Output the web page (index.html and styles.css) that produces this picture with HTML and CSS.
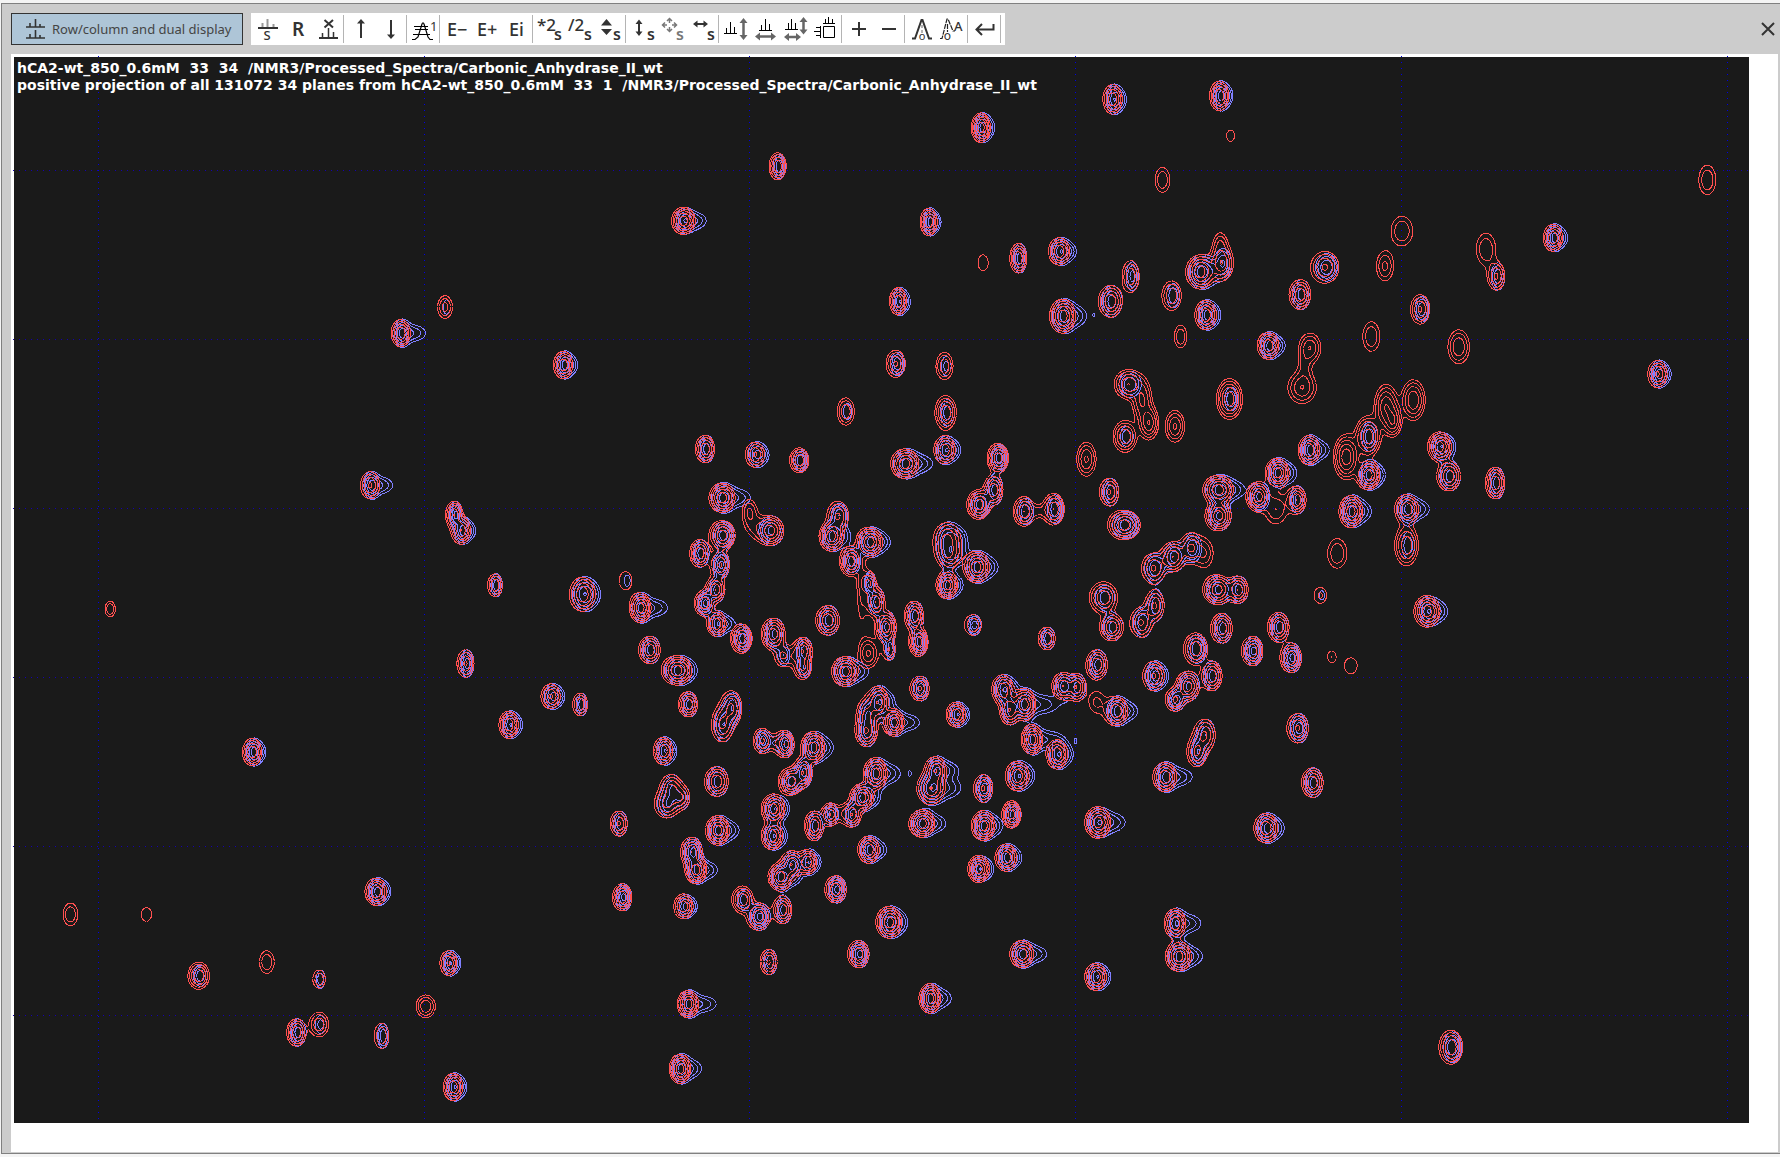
FILE: index.html
```html
<!DOCTYPE html>
<html lang="en">
<head>
<meta charset="utf-8">
<title>Row/column and dual display</title>
<link rel="stylesheet" href="styles.css">
</head>
<body>
<main class="window">
  <header class="bar">
    <button class="mode" type="button">
      <svg class="mode-icon" viewBox="0 0 20 22"><path d="M0 9H19M0 20H19M4 5V9M9.5 1V9M14 6V9M4 16V20M9.5 12V20M14 17V20" stroke="#333" stroke-width="1.6" fill="none"/></svg>
      <span>Row/column and dual display</span>
    </button>
    <div class="tools" role="toolbar" aria-label="Dual display tools">
      <div class="group">
        <button type="button" aria-label="Swap spectra"><svg viewBox="0 0 30 32"><path d="M10.500 10V15M15.500 6V15M21.500 11V15" stroke="#999" stroke-width="2"/><path d="M6 15H26" stroke="#333" stroke-width="2"/><text x="15" y="27" font-size="13" font-weight="500" text-anchor="middle">S</text></svg></button>
        <button type="button" aria-label="Reset"><svg viewBox="0 0 30 32"><text x="16" y="22.500" font-size="19" font-weight="600" text-anchor="middle">R</text></svg></button>
        <button type="button" aria-label="Remove trace"><svg viewBox="0 0 30 32"><path d="M12.500 7L21 14.500M21 7L12.500 14.500M7 25H26" class="l2"/><path d="M10.500 20V25M16.500 15V25M21.500 19V25" class="l1"/></svg></button>
      </div>
      <div class="group">
        <button type="button" aria-label="Next"><svg viewBox="0 0 30 32"><path d="M16 8V25" class="l2"/><path d="M12 10.500L16 6L20 10.500Z" class="f"/></svg></button>
        <button type="button" aria-label="Previous"><svg viewBox="0 0 30 32"><path d="M16 7V23" class="l2"/><path d="M12 21.500L16 26L20 21.500Z" class="f"/></svg></button>
      </div>
      <div class="group">
        <button type="button" aria-label="First level"><svg viewBox="0 0 30 32"><path d="M4 26.500H7L10 24L14 11Q15 8.500 16 11L20 24L22 26.500H25M6 13.500H20M7 16.500H20M5 21.500H22" stroke="#000" stroke-width="1.2" fill="none"/><text x="22" y="18" font-size="13">1</text></svg></button>
      </div>
      <div class="group">
        <button type="button"><svg viewBox="0 0 30 32"><text x="6" y="23" font-size="18" font-weight="500">E−</text></svg></button>
        <button type="button"><svg viewBox="0 0 30 32"><text x="6" y="23" font-size="18" font-weight="500">E+</text></svg></button>
        <button type="button"><svg viewBox="0 0 30 32"><text x="8" y="23" font-size="18" font-weight="500">Ei</text></svg></button>
      </div>
      <div class="group">
        <button type="button"><svg viewBox="0 0 30 32"><text x="3" y="18" font-size="17" font-weight="500">*2</text><text x="20" y="27" font-size="16" font-weight="600">s</text></svg></button>
        <button type="button"><svg viewBox="0 0 30 32"><text x="4" y="18" font-size="17" font-weight="500">/2</text><text x="20" y="27" font-size="16" font-weight="600">s</text></svg></button>
        <button type="button"><svg viewBox="0 0 30 32"><path d="M7 12.500L12.500 6L18 12.500ZM7 16L12.500 22L18 16Z" class="f"/><text x="19" y="27" font-size="16" font-weight="600">s</text></svg></button>
      </div>
      <div class="group">
        <button type="button"><svg viewBox="0 0 30 32"><path d="M12 9V21" class="l2"/><path d="M8.500 11L12 6.500L15.500 11ZM8.500 18.500L12 23L15.500 18.500Z" class="f"/><text x="20" y="27" font-size="16" font-weight="600">s</text></svg></button>
        <button type="button"><svg viewBox="0 0 30 32"><path d="M12.500 10V6M10 8L12.500 5.500L15 8M12.500 14V18M10 16L12.500 18.500L15 16M10 12H6M8 9.500L5.500 12L8 14.500M15 12H19M17 9.500L19.500 12L17 14.500" stroke="#777" stroke-width="1.500" fill="none"/><text x="19" y="27" font-size="16" font-weight="600" fill="#777">s</text></svg></button>
        <button type="button"><svg viewBox="0 0 30 32"><path d="M9 11H18" class="l2"/><path d="M10.500 7.500L6 11L10.500 14.500ZM16.500 7.500L21 11L16.500 14.500Z" class="f"/><text x="20" y="27" font-size="16" font-weight="600">s</text></svg></button>
      </div>
      <div class="group">
        <button type="button" aria-label="Fit vertically"><svg viewBox="0 0 30 32"><path d="M4 20.500H17M6.500 15V20M10.500 9V20M14.500 14V20" class="k"/><path d="M23.500 9V23" stroke="#666" stroke-width="2.500"/><path d="M19.500 10L23.500 5L27.500 10ZM19.500 22L23.500 27L27.500 22Z" fill="#666"/></svg></button>
        <button type="button" aria-label="Fit horizontally"><svg viewBox="0 0 30 32"><path d="M9 17.500H22M11.500 12V17M15.500 6V17M19.500 11V17" class="k"/><path d="M8 23.500H23" stroke="#666" stroke-width="2.500"/><path d="M10 19.500L5 23.500L10 27.500ZM21 19.500L26 23.500L21 27.500Z" fill="#666"/></svg></button>
        <button type="button" aria-label="Fit all"><svg viewBox="0 0 30 32"><path d="M5 16.500H18M8.500 10V16M11.500 6V16M15.500 10V16" class="k"/><path d="M23.500 8V18M8 24H17" stroke="#666" stroke-width="2.500"/><path d="M19.500 9L23.500 4L27.500 9ZM19.500 16.500L23.500 21.500L27.500 16.500ZM9 20L4 24L9 28ZM16 20L21 24L16 28Z" fill="#666"/></svg></button>
        <button type="button" aria-label="Projections"><svg viewBox="0 0 30 32"><path d="M13.500 13.500H24.500V24.500H13.500ZM13 10.500H25M15.500 6V10M18.500 4V10M22.500 6V10M10.500 13V25M6 14.500H10M4 18.500H10M6 22.500H10" class="k"/></svg></button>
      </div>
      <div class="group">
        <button type="button" aria-label="Add"><svg viewBox="0 0 30 32"><path d="M9 16H23M16 9V23" class="l2"/></svg></button>
        <button type="button" aria-label="Subtract"><svg viewBox="0 0 30 32"><path d="M9 16H23" class="l2"/></svg></button>
      </div>
      <div class="group">
        <button type="button" aria-label="Baseline peak"><svg viewBox="0 0 30 32"><path d="M6 25.500H9L15.500 7H16.500L23 25.500H26" class="l2"/><path d="M16 12V20" stroke="#999" stroke-width="1.500" stroke-dasharray="3 2"/><text x="16" y="27" font-size="11" text-anchor="middle">o</text></svg></button>
        <button type="button" aria-label="Automatic peak"><svg viewBox="0 0 30 32"><path d="M4 25.500H6L11 6H12L17 18H19M11.500 11V19" stroke="#222" stroke-width="1.200" stroke-dasharray="5 1" fill="none"/><text x="18" y="18" font-size="13" font-weight="500">A</text><text x="11.500" y="27" font-size="12" text-anchor="middle">o</text></svg></button>
      </div>
      <div class="group">
        <button type="button" aria-label="Return"><svg viewBox="0 0 30 32"><path d="M24.500 11V16.500H8M13 11L7.500 16.500L13 22" class="l2"/></svg></button>
      </div>
    </div>
    <button class="close" type="button" aria-label="Close"><svg viewBox="0 0 14 14"><path d="M1 1L13 13M13 1L1 13" class="l2"/></svg></button>
  </header>
  <section class="panel">
    <div class="plot">
      <svg class="spectrum" viewBox="12.3 50.2 1528.4 939" role="img" aria-label="Contour plot of two overlaid spectra">
        <path class="grid-row" d="M11.500 150H1540.700M11.500 299H1540.700M11.500 448H1540.700M11.500 597H1540.700M11.500 746H1540.700M11.500 894.500H1540.700"/>
        <path class="grid-col" d="M86.700 49.400V989M373.900 49.400V989M660.200 49.400V989M947.500 49.400V989M1234.700 49.400V989M1521.900 49.400V989"/>
        <path id="projection" class="contour contour-blue"/>
        <path id="plane" class="contour contour-red"/>
      </svg>
      <p class="caption">hCA2-wt_850_0.6mM  33  34  /NMR3/Processed_Spectra/Carbonic_Anhydrase_II_wt
positive projection of all 131072 34 planes from hCA2-wt_850_0.6mM  33  1  /NMR3/Processed_Spectra/Carbonic_Anhydrase_II_wt</p>
    </div>
  </section>
</main>
<script src="spectrum.js"></script>
</body>
</html>
```
FILE: styles.css
```css
* { box-sizing: border-box; }
body { margin: 0; background: #f4f4f4; font-family: "Noto Sans", sans-serif; color: #333; }
.window { margin: 3px 0 3px 1px; padding: 0 2px 1px 9px; border: 1px solid #808080; border-right: 0; background: #ccc; }
.bar { display: flex; align-items: center; height: 50px; }
button { margin: 0; padding: 0; border: 0; background: none; font: inherit; color: inherit; }
svg { display: block; }
.mode { display: flex; align-items: center; gap: 6px; height: 32px; width: 232px; padding-left: 14px; border: 1px solid #333; background: #aec5d7; font-size: 13px; white-space: nowrap; color: #444; }
.mode-icon { width: 20px; height: 22px; }
.tools { display: flex; height: 32px; margin-left: 8px; padding: 0 3px 0 1px; background: #fff; }
.group { display: flex; padding-right: 3px; background: linear-gradient(#b4b4b4, #b4b4b4) right 1px center / 1px 28px no-repeat; }
.group button, .group svg { width: 30px; height: 32px; }
.group text { fill: #333; font-family: "Noto Sans", sans-serif; }
.group text[fill] { fill: #777; }
.l1 { stroke: #333; stroke-width: 1.5; fill: none; }
.l2 { stroke: #333; stroke-width: 2; fill: none; }
.k { stroke: #000; stroke-width: 1; fill: none; }
.f { fill: #333; }
.close { margin-left: auto; margin-right: 3px; }
.close svg { width: 14px; height: 14px; }
.panel { padding: 3px 29px 29px 3px; background: #fff; }
.plot { position: relative; background: #1a1a1a; }
.spectrum { width: 100%; height: auto; overflow: visible; }
.spectrum path { fill: none; stroke-width: 1px; vector-effect: non-scaling-stroke; shape-rendering: crispEdges; }
.spectrum .grid-row { stroke: #1400b4; stroke-dasharray: 1 5; }
.spectrum .grid-col { stroke: #0000e6; stroke-dasharray: 1 5; }
.spectrum .contour-blue { stroke: #8080ff; }
.spectrum .contour-red { stroke: #ff5050; }
.caption { position: absolute; left: 3px; top: 3px; margin: 0; font: bold 14px/17px "DejaVu Sans", sans-serif; white-space: pre; color: #fff; }
```
FILE: spectrum.js
```js
// One peak per entry: x y rx ry redLevels blueLevels [blueTail]
const peaks = `
981 87 8 13 5 5 2;1075 84 8 13 5 6 2;1085 119 3 5 1 0;865 112 8 13 6 6 2;686 146 7 12 5 4;603 194 10 12 6 5 8;819 195 7 12 5 6 2
1025 158 6 11 2 0;1505 158 7 13 2 0;1236 203 9 13 2 0;1221 234 7 13 2.3 0;1369 209 8 12 5 6 3;867 231 4 7 1 0;898 227 7 13 5 5
934 221 9 12 5 5 4;997 243 7 14 3 2.5;1058 239 12 15 6 6 6;1077 231 10 16 5 3;1076 215 5 10 2 0;1168 235 12 14 4 3;1146 259 9 13 5 5;1033 260 8 13 3 2
979 265 10 14 5 5;937 278 11 15 6 6 8;963 277 1.5 1.5 0 1;1063 277 9 13 5 6 2;1041 296 5 10 2 0;1118 304 9 12 5 6 4;1155 306 9 13 3 0
1150 322 3 8 1 0;1148 341 12 14 3 0;1209 296 7 13 2 0;1252 272 8 13 4 3;1310 219 8 14 2 0;1319 243 7 12 4 4;1286 305 9 15 3 0;1461 329 8 12 4 6 2
792 265 7 12 5 5 2;790 320 8 12 4 3;833 322 7 12 3 1.5;746 362 7 12 3 1;834 363 9 15 5 3;393 270 6 10 2.5 1;354 293 8 12 5 6 12
497 321 8 12 5 6 3;995 338 12 13 5 4;1007 352 8 18 4 0;1013 372 8 15 5 0;992 384 10 14 5 2;1036 375 8 14 4 0;1084 351 11 18 6 2
958 404 8 15 4 0;1246 352 10 18 5 0;1222 358 10 20 5 0;1228 370 7 14 5 0;1206 384 11 18 6 3;1187 402 11 20 6 0;1154 396 9 13 5 6 7
1269 393 10 13 6 5 2;1277 419 10 13 5 5;1318 425 8 14 5 5;1206 418 10 13 6 6 3;1126 416 10 13 6 6 5;1109 437 10 13 6 6;1143 440 8 12 5 5
1125 448 9 13 2 0;1074 431 13 13 6 6 8;1074 454 11 13 6 6;1191 450 10 14 6 6 6;1240 448 10 13 5 6 8;1240 480 10 18 5 2;1179 487 8 13 2 0
1164 524 5 7 1.2 .4;1258 538 11 14 6 5 5;1174 578 3 5 1 0;1191 586 5 7 1 0;327 427 8 12 4 6 10;401 453 7 12 5 6;407 467 8 12 5 6 3
437 515 6 10 3 3;514 523 11 15 5 5 2;552 511 5 8 1 .4;98 536 4 7 2 0;565 535 9 13 6 6 13;573 572 9 12 5 5;411 584 7 12 4 5
486 613 8 11 4 4 2;512 620 6 10 3 3;449 638 8 12 5 5 2;597 590 13 13 6 6 2;607 620 8 11 5 5;223 662 8 12 5 6 2;622 395 8 12 5 5
666 400 8 11 4 4 2;705 405 8 11 5 4;798 408 12 13 6 6 10;833 396 9 12 5 5 3;880 403 9 13 6 5;876 431 8 13 5 5;863 444 10 13 6 5
903 450 9 13 5 4;916 450 4 4 1 0;929 448 9 14 5 4;978 433 8 12 4 4;991 462 14 13 6 5;637 438 11 13 6 6 12;637 471 11 13 6 5;617 487 8 12 5 5
635 497 8 12 4 6;631 519 8 11 5 5;621 531 8 11 5 6;632 549 8 11 5 5 6;654 562 9 13 6 5;661 450 5 10 2 0;665 462 5 8 1 0;679 467 12 13 6 6
739 454 9 13 4 3;733 472 10 13 6 6 5;767 477 11 13 6 6 5;750 494 9 13 6 5;766 513 6 10 4 5;772 530 8 13 5 5;781 552 9 14 6 6
760 520 3 24 1 0;766 575 8 13 4 0;784 572 5 9 2 3;730 546 10 13 5 5;745 591 11 13 6 6 8;682 558 10 14 6 6;690 577 6 9 2 2;699 578 4 5 1 0;708 573 8 12 5 5
708 588 7 10 4 3;806 542 8 13 5 5;810 565 8 13 6 5;811 606 8 11 4 5;835 474 11 14 4 4 4;836 487 10 13 4 4 4;835 515 9 12 6 6 3
861 499 11 14 6 6 6;858 550 7 9 2 5;923 562 7 10 3 3;843 629 8 11 5 5 2;645 623 9 15 4 3;637 638 9 15 4 4;774 618 9 14 5 5 4
764 629 8 14 4 4;764 644 9 13 5 5;788 636 9 12 6 6 12;585 661 8 12 5 5 2;592 694 9 12 4 4;588 708 10 12 4 4;600 702 8 10 3 3;632 688 10 13 5 5
672 652 7 11 4 5;682 654 4 5 1 1;692 655 8 12 5 6;717 658 10 14 6 6 6;697 688 10 12 6 5;708 680 8 13 5 6;682 712 10 13 6 5 2;681 736 9 12 5 5 2
718 727 8 13 5 5;732 717 7 10 5 5;742 716 4 5 1 0;751 717 8 11 5 5;760 702 10 12 6 6 4;772 681 10 14 6 6 10;801 681 1 2 0 1;825 678 9 12 5 5 9
821 694 12 14 5 5 12;813 725 11 12 6 6 8;867 694 8 12 4 5;897 683 10 13 5 5 3;867 727 10 13 6 6 5;892 717 8 12 6 5;887 755 9 12 5 6 3
863 765 9 12 6 5 2;766 748 9 12 5 6 5;633 731 10 13 6 6 7;546 725 7 11 4 4;610 750 9 13 5 6;614 766 9 12 6 6 8;549 790 8 12 5 6
603 798 8 11 5 4 2;655 792 9 12 5 3;669 807 10 12 5 6;690 801 8 12 5 5;688 772 10 12 6 6 6;698 761 9 12 5 6;712 759 8 11 5 5 2
737 783 9 12 5 6;678 847 7 11 4 4;757 840 9 12 5 6;784 812 11 14 6 6 3;884 607 9 13 5 5 3;890 625 8 13 5 5;903 620 10 14 6 6 18
910 651 9 13 6 6 14;932 664 9 13 5 5 3;937 604 9 12 5 5;949 605 8 12 5 5;967 585 9 13 5 5;984 626 10 13 5 6 7;967 618 6 9 1.3 0
1017 595 9 13 4 6 2;973 526 12 14 5 3;980 552 10 12 5 5;1006 548 9 13 4 4;1018 533 8 13 4 4;1017 500 10 13 4 4;1034 490 10 13 5 5
1050 482 9 13 4 4;1062 487 7 12 2 0;1073 519 12 13 6 6;1091 519 9 12 5 5;1077 553 9 13 5 5;1054 571 10 14 5 4;1104 573 9 13 5 6
1127 552 9 13 5 5;1138 579 9 13 5 6;1047 604 10 13 6 6;1036 616 8 10 4 5;1068 595 9 13 5 5;1062 647 9 14 4 4;1055 662 8 13 4 3
1144 641 9 13 4 5;1157 689 9 13 5 5;1116 729 10 13 5 6 4;1027 684 10 13 5 6 12;968 724 11 14 6 5 11;1036 813 9 13 5 5 12
1039 842 11 13 6 6 8;966 860 9 12 5 5 2;901 840 10 12 5 6 10;820 879 9 13 6 6 8;332 785 9 12 5 6 2;396 848 7 11 4 5 2
63 805 6 10 2 0;130 805 4 6 1 0;176 859 9 12 5 3;236 847 6 10 2 0;282 862 5 8 2 2;262 909 8 12 5 5;282 902 8 11 3 1.5
337 912 6 11 2 3;376 886 8 10 3 0;400 957 8 12 5 5 2;607 884 9 12 6 6 14;600 941 9 13 6 6 8;1279 922 10 15 5 4;947 652 1 2 0 1
`.trim().split(/[;\n]/).map(row => row.split(' ').map(Number));

const X0 = 13, Y0 = 51, W = 1527, H = 937, STEP = 0.5, LEVELS = 7;

function addBlob(field, x, y, rx, ry, n) {
  const r = 1 + 4 / (STEP * n);
  const top = Math.max(0, Math.floor(y - ry * r - Y0)), end = Math.min(H - 1, Math.ceil(y + ry * r - Y0));
  const left = Math.max(0, Math.floor(x - rx * r - X0)), right = Math.min(W - 1, Math.ceil(x + rx * r - X0));
  for (let j = top; j <= end; j++) {
    for (let i = left; i <= right; i++) {
      const u = (i + X0 - x) / rx, v = (j + Y0 - y) / ry;
      field[j * W + i] += Math.exp(STEP * n * (1 - Math.pow(u * u + v * v, 0.85)));
    }
  }
}

// Marching squares over the whole field, one pass per level
function contours(field) {
  const out = [];
  for (let k = 0; k < LEVELS; k++) {
    const level = Math.exp(STEP * k);
    for (let j = 0; j < H - 1; j++) {
      for (let i = 0; i < W - 1; i++) {
        const p = j * W + i;
        const a = field[p] - level, b = field[p + 1] - level;
        const c = field[p + W + 1] - level, d = field[p + W] - level;
        if ((a > 0) === (b > 0) && (b > 0) === (c > 0) && (c > 0) === (d > 0)) continue;
        const x = i + X0, y = j + Y0, pts = [];
        if ((a > 0) !== (b > 0)) pts.push([x + a / (a - b), y]);
        if ((b > 0) !== (c > 0)) pts.push([x + 1, y + b / (b - c)]);
        if ((c > 0) !== (d > 0)) pts.push([x + d / (d - c), y + 1]);
        if ((d > 0) !== (a > 0)) pts.push([x, y + a / (a - d)]);
        for (let s = 0; s + 1 < pts.length; s += 2) {
          out.push('M' + pts[s].map(t => t.toFixed(2)) + 'L' + pts[s + 1].map(t => t.toFixed(2)));
        }
      }
    }
  }
  return out.join('');
}

const red = new Float32Array(W * H), blue = new Float32Array(W * H);
for (const [x, y, rx, ry, nr, nb, tail = 0] of peaks) {
  const levelsRed = nr > 3 ? nr * 0.8 : nr, levelsBlue = nb > 3 ? nb * 0.75 : nb;
  if (nr) addBlob(red, x - 1, y + 0.5, rx + 0.5, ry, levelsRed);
  if (nb) {
    const s = nr > nb ? Math.sqrt(nb / nr) : 1;
    addBlob(blue, x + 0.5, y + 0.5, (rx - 1) * s || 1, ry * s, levelsBlue);
    if (tail) addBlob(blue, x + rx * 0.6 + tail * 0.3, y + 0.5, rx * 0.5 + tail * 0.7, ry * 0.6, 2);
  }
}
document.getElementById('plane').setAttribute('d', contours(red));
document.getElementById('projection').setAttribute('d', contours(blue));
```
